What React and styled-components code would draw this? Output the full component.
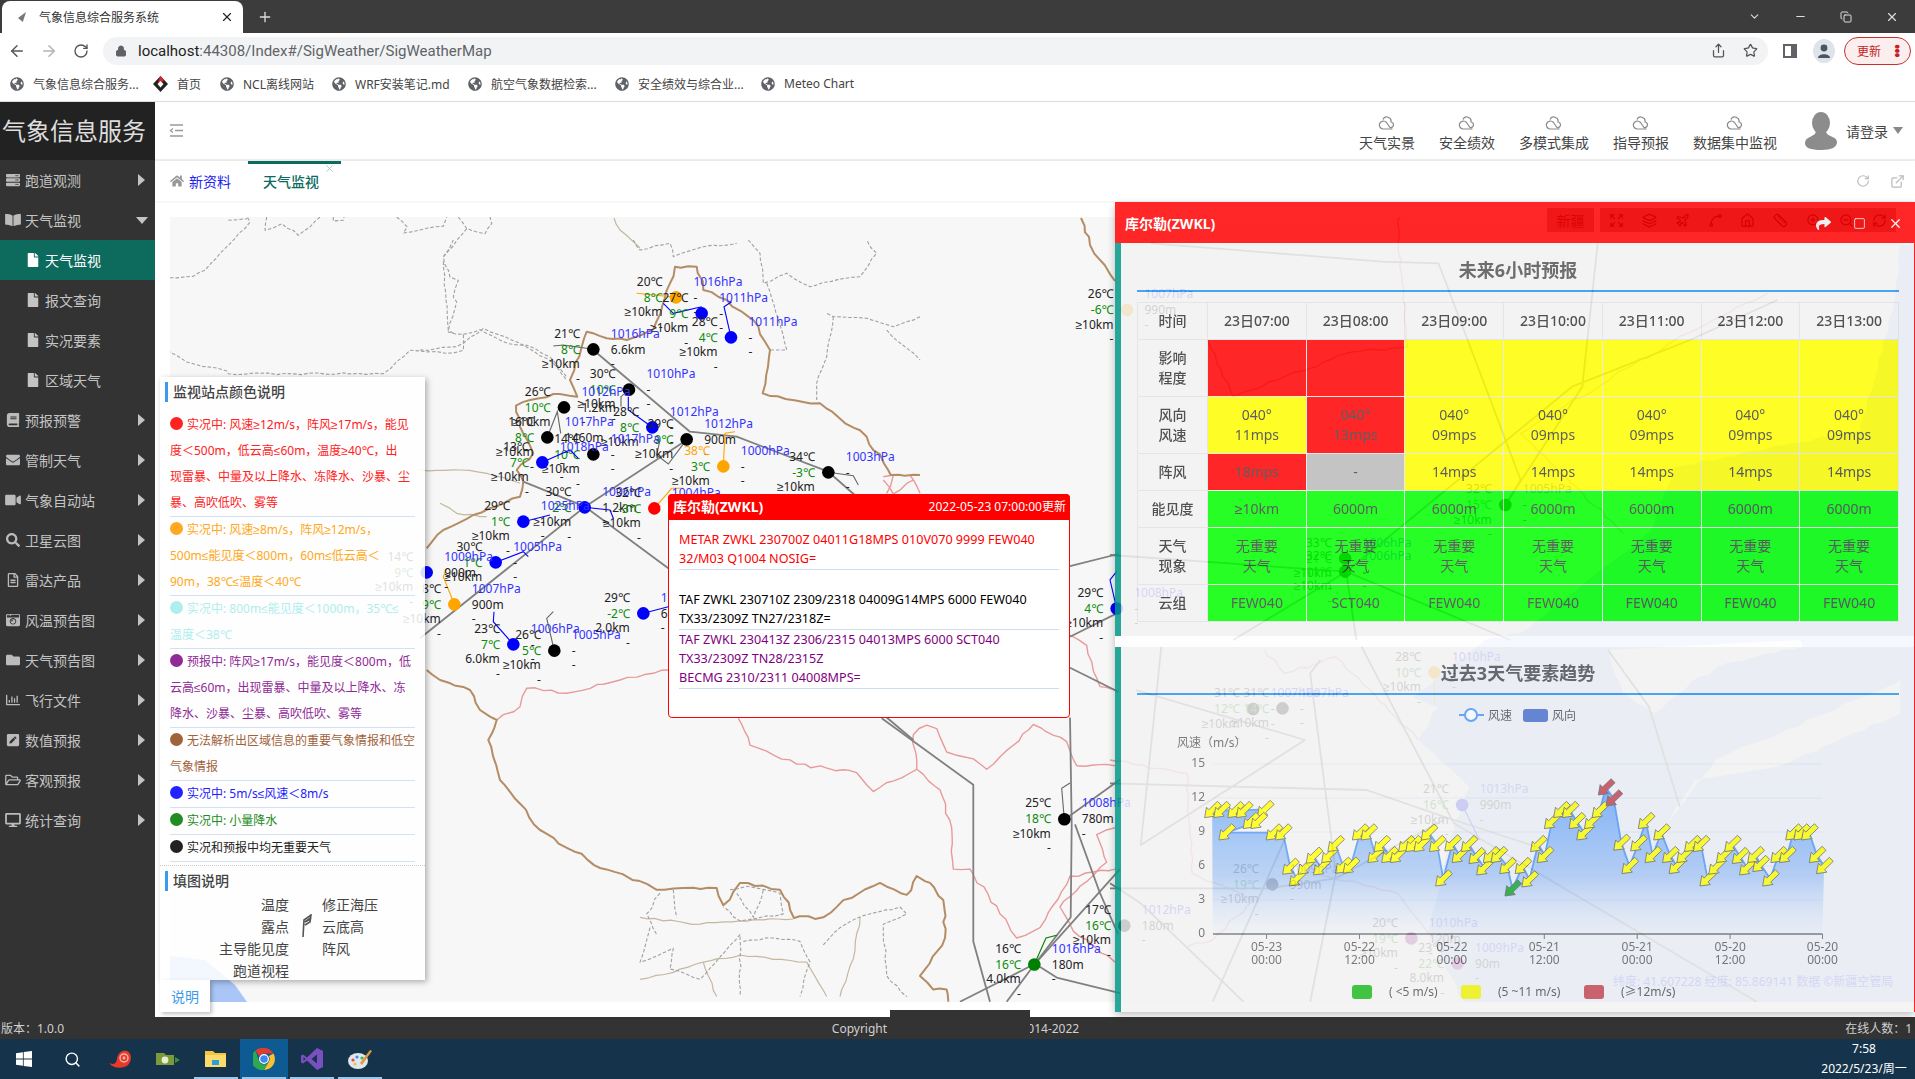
import React from 'react';
import styled, { createGlobalStyle } from 'styled-components';
import {
  ArrowLeft, ArrowRight, RotateCw, Lock, Share, Star, X, Plus, ChevronDown, Minus, Copy, Square, Search,
  Expand, Layers, Plane, Spline, Home, Ruler, ZoomIn, ZoomOut, RefreshCw, RotateCw as Reload, ExternalLink,
} from 'lucide-react';
import {
  FaGlobeAmericas, FaServer, FaBookOpen, FaFile, FaBook, FaEnvelope, FaVideo, FaSearch, FaRegFileAlt, FaCameraRetro,
  FaFolder, FaRegChartBar, FaPenSquare, FaRegFolderOpen, FaDesktop, FaHome, FaShare,
} from 'react-icons/fa';

const FONT = `"Noto Sans", "Liberation Sans", "Noto Sans CJK SC", sans-serif`;

const Global = createGlobalStyle`
  html, body { margin: 0; padding: 0; width: 1915px; height: 1079px; overflow: hidden; background: #fff; }
  * { box-sizing: border-box; }
  body { font-family: ${FONT}; font-size: 14px; }
`;

/* ---------- coordinate helpers: crops of the reference to page pixels ---------- */
const z4 = ([x, y]) => [1110 + x / 1.948, 200 + y / 3];
const z5 = ([x, y]) => [1110 + x / 1.948, 640 + y / 3];
const z6 = ([x, y]) => [420 + x / 3, 240 + y / 3];
const z7 = ([x, y]) => [640 + x / 3, 480 + y / 2.904];
const z8 = ([x, y]) => [170 + x / 3, 217 + y / 3];
const pts = (arr, f = (p) => p) => arr.map((p) => f(p).map((n) => n.toFixed(1)).join(',')).join(' ');

let seed = 7;
const rnd = () => { seed = (seed * 16807) % 2147483647; return seed / 2147483647 - 0.5; };
/* jagged border line through the given points, the way a real boundary wanders */
const rough = (line, amp = 3, step = 9) => {
  const out = [line[0]];
  for (let i = 1; i < line.length; i += 1) {
    const [ax, ay] = line[i - 1];
    const [bx, by] = line[i];
    const n = Math.max(1, Math.round(Math.hypot(bx - ax, by - ay) / step));
    for (let k = 1; k <= n; k += 1) {
      const t = k / n;
      out.push(k === n ? [bx, by] : [ax + (bx - ax) * t + rnd() * amp, ay + (by - ay) * t + rnd() * amp]);
    }
  }
  return out;
};

/* ---------- browser chrome ---------- */
const Page = styled.div`
  width: 1915px; height: 1079px; display: flex; flex-direction: column; overflow: hidden;
`;
const TabStrip = styled.div`
  height: 33px; background: #3c3c3c; display: flex; align-items: flex-end; color: #fff; flex: none;
`;
const BrowserTab = styled.div`
  width: 241px; height: 32px; margin-left: 2px; background: #fff; border-radius: 8px 8px 0 0; color: #333;
  display: flex; align-items: center; font-size: 12px; padding-left: 16px;
`;
const TabFav = styled.span`
  width: 8px; height: 10px; margin-right: 13px; background: #777; clip-path: polygon(100% 0, 60% 100%, 0 60%);
`;
const TabClose = styled.span`
  margin-left: auto; margin-right: 9px; display: flex; color: #222;
`;
const NewTab = styled.span`
  margin-left: 14px; height: 32px; display: flex; align-items: center; color: #ddd;
`;
const WinControls = styled.div`
  margin-left: auto; height: 33px; display: flex; align-items: center; gap: 33px; padding-right: 16px; color: #ddd;
`;
const Toolbar = styled.div`
  height: 35px; background: #fff; display: flex; align-items: center; flex: none; color: #555; padding-left: 1px;
`;
const NavIcon = styled.span`
  width: 32px; display: flex; justify-content: center; color: ${(p) => (p.$dim ? '#b4b4b4' : '#555')};
`;
const AddressBar = styled.div`
  width: 1665px; height: 28px; margin-left: 6px; background: #f1f3f4; border-radius: 14px; display: flex; align-items: center;
  padding-left: 12px; font-size: 15px; font-family: Roboto, sans-serif; color: #5f6368;
`;
const Url = styled.span`
  margin-left: 11px; b { font-weight: 400; color: #222; }
`;
const AddressEnd = styled.div`
  margin-left: auto; display: flex; gap: 17px; padding-right: 10px; color: #555;
`;
const SidePanelIcon = styled.span`
  width: 14px; height: 14px; border: 2px solid #5f6368; border-right-width: 6px; margin-left: 15px;
`;
const ProfileDot = styled.span`
  width: 22px; height: 24px; border-radius: 50%; background: #dfe3ea; margin-left: 16px; display: flex; align-items: center; justify-content: center;
`;
const UpdatePill = styled.div`
  width: 67px; height: 28px; margin-left: 9px; border: 1px solid #c9302c; border-radius: 14px; background: #fbeeee; color: #c5221f;
  display: flex; align-items: center; justify-content: space-between; padding: 0 9px 0 12px; font-size: 12px;
`;
const Dots = styled.span`
  font-size: 14px; line-height: 8px; writing-mode: vertical-rl; letter-spacing: -1px; font-weight: 700;
`;
const BookmarkBar = styled.div`
  height: 34px; border-bottom: 1px solid #dcdcdc; display: flex; align-items: center; padding: 0 0 2px 10px; gap: 15px; font-size: 12px; color: #444; flex: none;
`;
const Bookmark = styled.span`
  display: flex; align-items: center; gap: 9px; width: ${(p) => p.$w}px; white-space: nowrap;
  svg { color: #5f6368; flex: none; }
`;

/* ---------- app shell ---------- */
const Body = styled.div`
  flex: 1; display: flex; min-height: 0;
`;
const Sidebar = styled.aside`
  width: 155px; flex: none; background: #333; display: flex; flex-direction: column;
`;
const Logo = styled.div`
  height: 58px; background: #222; color: #ddd; font-size: 24px; display: flex; align-items: center; padding: 0 0 3px 2px; white-space: nowrap;
`;
const MenuItem = styled.div`
  height: 40px; display: flex; align-items: center; color: #c4c4c4; padding-left: 5px; gap: 4px;
  svg.ic { width: 16px; height: 14px; color: #bbb; flex: none; }
`;
const Caret = styled.span`
  margin-left: auto; margin-right: 10px; width: 0; height: 0; border-style: solid;
  border-width: ${(p) => (p.$open ? '7px 6px 0 6px' : '6px 0 6px 7px')};
  border-color: ${(p) => (p.$open ? '#c4c4c4 transparent transparent transparent' : 'transparent transparent transparent #c4c4c4')};
  ${(p) => (p.$open ? 'margin-right: 7px;' : '')}
`;
const SubItem = styled.div`
  height: 40px; display: flex; align-items: center; padding-left: 27px; gap: 6px;
  background: ${(p) => (p.$active ? '#0d6b5e' : 'transparent')}; color: ${(p) => (p.$active ? '#fff' : '#c4c4c4')};
  svg { width: 12px; height: 14px; }
`;
const Main = styled.main`
  flex: 1; min-width: 0; display: flex; flex-direction: column;
`;
const TopHeader = styled.header`
  height: 59px; flex: none; border-bottom: 2px solid #ececec; display: flex; align-items: center; padding-left: 14px; color: #444;
`;
const HamburgerIcon = styled.span`
  display: flex; color: #999;
`;
const TopNav = styled.nav`
  margin-left: auto; display: flex; gap: 24px; margin-right: 27px; padding-top: 6px;
`;
const NavItem = styled.div`
  display: flex; flex-direction: column; align-items: center; gap: 4px; line-height: 18px; color: #444;
`;
const User = styled.div`
  display: flex; align-items: center; gap: 8px; margin-right: 12px; color: #444;
`;
const UserCaret = styled.span`
  width: 0; height: 0; border-style: solid; border-width: 7px 5px 0 5px; border-color: #888 transparent transparent transparent; margin-left: -3px;
`;
const TabRow = styled.div`
  height: 40px; flex: none; display: flex; align-items: center; padding-left: 15px; color: #888; box-shadow: 0 1px 2px rgba(0, 0, 0, .06); position: relative; z-index: 1;
`;
const HomeTab = styled.div`
  display: flex; align-items: center; gap: 5px; color: #2222ee; width: 78px; svg { color: #999; }
`;
const ActiveTab = styled.div`
  width: 93px; height: 40px; border-top: 3px solid #0d6b5e; color: #0d6b5e; padding: 7px 0 0 15px; position: relative; font-weight: 500;
`;
const TabX = styled.span`
  position: absolute; right: 6px; top: -1px; color: #9fcfc4; display: flex;
`;
const TabTools = styled.div`
  margin-left: auto; display: flex; gap: 20px; padding-right: 10px; color: #bbb;
`;
const Content = styled.div`
  flex: 1; min-height: 0; position: relative; padding: 16px 0 0 15px;
`;
const MapFrame = styled.div`
  position: relative; width: 1745px; height: 785px; background: #f7f7f7;
`;
const MapSvg = styled.svg`
  display: block; width: 1745px; height: 785px; font-family: "Noto Sans", sans-serif; font-size: 12px;
`;
const MapTools = styled.div`
  position: absolute; left: 1392px; top: 7px; display: flex; gap: 6px; height: 24px; z-index: 1;
`;
const RegionBtn = styled.div`
  width: 47px; background: #999; color: #111; font-size: 14px; display: flex; align-items: center; justify-content: center;
`;
const ToolIcons = styled.div`
  width: 296px; background: #999; display: flex; align-items: center; justify-content: space-around; color: #000;
`;
const Censor = styled.div`
  position: absolute; left: 735px; bottom: 0; width: 140px; height: 7px; background: #333;
`;

/* ---------- legend panel ---------- */
const Legend = styled.section`
  position: absolute; left: -10px; top: 160px; width: 265px; height: 603px; background: rgba(255, 255, 255, .86);
  box-shadow: 2px 2px 6px rgba(0, 0, 0, .3); padding-top: 5px;
`;
const LegendTitle = styled.h4`
  margin: 0 0 0 5px; height: 20px; line-height: 20px; border-left: 3px solid #3b9be8; padding-left: 5px; font-size: 14px; font-weight: 500; color: #444;
`;
const LegendList = styled.div`
  margin: 10px 10px 3px;
`;
const LegendRow = styled.div`
  border-bottom: 1px solid #d4e0f5; color: ${(p) => p.$c}; font-size: 12px; line-height: 26px; height: ${(p) => p.$n * 26 + 1}px; white-space: nowrap;
`;
const Bullet = styled.i`
  display: inline-block; width: 13px; height: 13px; border-radius: 50%; background: ${(p) => p.$c}; margin-right: 4px; vertical-align: -1px;
`;
const DottedLine = styled.div`
  border-top: 1px dotted #ccc; margin-bottom: 5px;
`;
const FillGrid = styled.div`
  display: grid; grid-template-columns: 129px 33px 1fr; grid-auto-rows: 22px; align-items: center; margin-top: 2px; color: #444; font-size: 14px;
`;
const FillLeft = styled.span`
  text-align: right; grid-column: 1; white-space: nowrap;
`;
const FillRight = styled.span`
  grid-column: 3; white-space: nowrap;
`;
const FlagWrap = styled.span`
  grid-column: 2; grid-row: 1 / 3; display: flex; justify-content: center; padding-top: 22px; padding-right: 1px; margin-left: 4px;
`;
const LegendTab = styled.div`
  position: absolute; left: -10px; top: 763px; width: 50px; height: 32px; background: #fff; color: #3b9be8; font-size: 14px;
  display: flex; align-items: center; justify-content: center; box-shadow: 2px 2px 4px rgba(0, 0, 0, .25);
`;

/* ---------- popup ---------- */
const Popup = styled.section`
  position: absolute; left: 498px; top: 277px; width: 402px; height: 224px; background: #fff; border: 1px solid #f00; border-radius: 4px;
  color: #000; font-size: 12.6px; line-height: 19.4px; &::before {
    content: ''; position: absolute; left: -9px; top: 7px; border-style: solid; border-width: 6px 8px 6px 0; border-color: transparent #fff transparent transparent;
  }
`;
const PopupHead = styled.header`
  height: 26px; background: #f00; color: #fff; display: flex; align-items: center; justify-content: space-between; padding: 0 4px 0 5px; margin: -1px -1px 0; border-radius: 4px 4px 0 0;
  b { font-size: 14px; } span { font-size: 12px; }
`;
const PopupBody = styled.div`
  padding: 10px 10px 0 10px;
`;
const Report = styled.div`
  color: ${(p) => p.$c}; border-bottom: 1px solid #d0dcf4; margin-bottom: ${(p) => p.$gap || 0}px; white-space: nowrap;
`;

/* ---------- station window ---------- */
const Win = styled.section`
  position: absolute; left: 960px; top: 1px; width: 800px; height: 810px; background: #fff; opacity: .85;
  border-right: 1px solid #f00; border-bottom: 1px solid #f00; box-shadow: 0 3px 8px rgba(0, 0, 0, .3); z-index: 2;
  display: flex; flex-direction: column;
`;
const WinHead = styled.header`
  height: 41px; background: #f00; color: #fff; flex: none; display: flex; align-items: center; padding: 0 11px 0 10px; font-size: 14px; font-weight: 700;
`;
const WinTools = styled.div`
  margin-left: auto; display: flex; align-items: center; gap: 22px; padding-top: 2px;
`;
const Panel = styled.div`
  height: ${(p) => p.$h}px; flex: none; border-left: 6px solid #009688; background: #f3f3f3; margin-top: ${(p) => p.$mt || 0}px; display: flex; flex-direction: column;
`;
const PanelTitle = styled.h3`
  margin: 0 15px 0 16px; height: ${(p) => p.$h}px; padding-top: ${(p) => p.$pt}px; border-bottom: 2px solid #2b97f0; color: #555; font-size: 18px; line-height: 24px; font-weight: 700; text-align: center; flex: none;
`;
const Table = styled.table`
  margin: 10px 0 0 16px; width: 762px; border-collapse: collapse; table-layout: fixed; color: #444; font-size: 14px; line-height: 20px;
`;
const Th = styled.th`
  width: ${(p) => p.$w || 'auto'}; height: ${(p) => (p.$tall ? 57 : 37)}px; border: 1px solid #e2e2e2; font-weight: 500; color: #333; padding: 0; text-align: center;
`;
const COLORS = { R: '#ff0000', Y: '#ffff00', G: '#00ff00', K: '#bbbbbb' };
const Td = styled.td`
  border: 1px solid #e8e8e8; background: ${(p) => COLORS[p.$c]}; padding: 0; text-align: center; color: #444; white-space: nowrap;
`;
const ChartSvg = styled.svg`
  display: block; width: 794px; height: 317px; font-family: "Noto Sans", "Noto Sans CJK SC", sans-serif; font-size: 12px;
`;

/* ---------- footer + taskbar ---------- */
const Footer = styled.footer`
  height: 22px; flex: none; background: #333; color: #d0d0d0; font-size: 12px; display: flex; align-items: center; justify-content: space-between; padding: 0 3px 0 1px; position: relative;
`;
const FootCenter = styled.span`
  position: absolute; left: 0; right: 4px; text-align: center; white-space: nowrap; word-spacing: 2px;
`;
const FootMask = styled.span`
  position: absolute; left: 890px; width: 140px; top: 0; bottom: 0; background: #333;
`;
const Taskbar = styled.div`
  height: 40px; flex: none; background: #15344b; display: flex; align-items: stretch; color: #fff;
`;
const TaskBtn = styled.div`
  width: 48px; display: flex; align-items: center; justify-content: center; position: relative;
  background: ${(p) => (p.$active ? '#0e5a93' : 'transparent')};
  ${(p) => p.$on && `&::after { content: ''; position: absolute; left: 2px; right: 2px; bottom: 0; height: 2px; background: #9cc7e8; }`}
`;
const Clock = styled.div`
  margin-left: auto; width: 102px; text-align: center; font-size: 12px; line-height: 20px; white-space: nowrap;
`;

/* ---------- data ---------- */
const MENUS = [
  [FaServer, '跑道观测'],
  [FaBookOpen, '天气监视', true],
  [FaBook, '预报预警'], [FaEnvelope, '管制天气'], [FaVideo, '气象自动站'], [FaSearch, '卫星云图'], [FaRegFileAlt, '雷达产品'],
  [FaCameraRetro, '风温预告图'], [FaFolder, '天气预告图'], [FaRegChartBar, '飞行文件'], [FaPenSquare, '数值预报'], [FaRegFolderOpen, '客观预报'], [FaDesktop, '统计查询'],
];
const SUBS = ['天气监视', '报文查询', '实况要素', '区域天气'];
const NAVS = ['天气实景', '安全绩效', '多模式集成', '指导预报', '数据集中监视'];
const BOOKS = [
  ['气象信息综合服务...', 128], ['首页', 52, true], ['NCL离线网站', 97], ['WRF安装笔记.md', 121], ['航空气象数据检索...', 132], ['安全绩效与综合业...', 131], ['Meteo Chart', 90],
];

const LEG = [
  ['#ff2222', ['实况中: 风速≥12m/s，阵风≥17m/s，能见', '度＜500m，低云高≤60m，温度≥40℃，出', '现雷暴、中量及以上降水、冻降水、沙暴、尘', '暴、高吹低吹、雾等']],
  ['#ffa820', ['实况中: 风速≥8m/s，阵风≥12m/s，', '500m≤能见度＜800m，60m≤低云高＜', '90m，38℃≤温度＜40℃']],
  ['#aeeeee', ['实况中: 800m≤能见度＜1000m，35℃≤', '温度＜38℃']],
  ['#8f2a96', ['预报中: 阵风≥17m/s，能见度＜800m，低', '云高≤60m，出现雷暴、中量及以上降水、冻', '降水、沙暴、尘暴、高吹低吹、雾等']],
  ['#a0623a', ['无法解析出区域信息的重要气象情报和低空', '气象情报']],
  ['#2222ff', ['实况中: 5m/s≤风速＜8m/s']],
  ['#228b22', ['实况中: 小量降水']],
  ['#222222', ['实况和预报中均无重要天气']],
];

const TIMES = ['23日07:00', '23日08:00', '23日09:00', '23日10:00', '23日11:00', '23日12:00', '23日13:00'];
const ROWS = [
  { h: ['影响', '程度'], tall: true, c: 'RRYYYYY', t: Array(7).fill(['']) },
  { h: ['风向', '风速'], tall: true, c: 'YRYYYYY', t: ['11', '13', '09', '09', '09', '09', '09'].map((v) => ['040°', `${v}mps`]) },
  { h: ['阵风'], c: 'RKYYYYY', t: [['18mps'], ['-'], ['14mps'], ['14mps'], ['14mps'], ['14mps'], ['14mps']] },
  { h: ['能见度'], c: 'GGGGGGG', t: [['≥10km'], ...Array(6).fill(['6000m'])] },
  { h: ['天气', '现象'], tall: true, c: 'GGGGGGG', t: Array(7).fill(['无重要', '天气']) },
  { h: ['云组'], c: 'GGGGGGG', t: [['FEW040'], ['SCT040'], ['FEW040'], ['FEW040'], ['FEW040'], ['FEW040'], ['FEW040']] },
];

/* --- map geometry, page coordinates through the crop helpers --- */
const BROWN = [
  [[20, 925], [70, 870], [160, 825], [250, 790], [300, 770], [310, 725], [290, 690], [340, 640], [300, 560], [288, 497], [330, 480], [400, 462], [472, 470], [450, 420], [485, 320], [500, 275], [560, 295], [620, 300], [700, 268], [750, 130], [765, 80], [830, 80], [850, 150], [920, 180], [1000, 240], [1050, 330], [1028, 460], [1200, 490], [1340, 590], [1412, 705], [1500, 705]].map(z6),
  [[20, 1290], [60, 1320], [150, 1350], [180, 1410], [230, 1440], [205, 1500]].map(z6).concat([[500, 780], [540, 830], [600, 868], [640, 881]]),
  [[0, 1165], [50, 1190], [130, 1185], [230, 1185], [250, 1235], [300, 1170], [420, 1190], [462, 1272], [550, 1270], [610, 1220], [720, 1170], [800, 1205], [830, 1150], [870, 1170], [910, 1220], [915, 1330], [840, 1440], [880, 1480], [920, 1480], [925, 1515]].map(z7),
  [[1081, 218], [1090, 245], [1115, 281]],
].map((l) => rough(l, 3.4, 8));
const PINK = [
  [[230, 1440], [300, 1400], [320, 1345], [440, 1360], [600, 1320], [700, 1300], [745, 1290]].map(z6),
  [[295, 692], [330, 770], [470, 825], [650, 850], [700, 905], [830, 840], [900, 900], [935, 1010], [940, 1130], [990, 1130], [1080, 1260], [1130, 1330], [1200, 1300], [1290, 1150], [1425, 1130]].map(z7),
  [[830, 840], [820, 740], [860, 712], [890, 722], [920, 790], [1000, 810], [1040, 840], [1120, 770], [1180, 710], [1280, 760], [1310, 830], [1425, 830]].map(z7),
  [[1290, 450], [1340, 480], [1380, 600], [1425, 610]].map(z7),
  [[1425, 1010], [1370, 1030], [1400, 1110], [1320, 1180], [1260, 1240], [1300, 1310], [1425, 1400]].map(z7),
  [[730, 0], [760, 40], [820, 0]].map(z7),
  [[1390, 710], [1420, 705], [1400, 760]].map(z6),
  [[1470, 705], [1500, 760]].map(z6),
  [[0, 360], [150, 400], [160, 700], [280, 780], [200, 900], [150, 920]].map(z5),
  [[300, 30], [340, 100], [440, 50], [600, 300]].map(z5),
  [[400, 700], [560, 760], [620, 880]].map(z5),
  [[190, 420], [240, 590], [460, 460], [580, 440], [560, 60], [590, 0]].map(z4),
  [[1000, 1000], [800, 700], [1100, 420], [1280, 280]].map(z4),
].map((l) => rough(l, 3.2, 8));
const GRAYDASH = [
  [[0, 182], [70, 178], [105, 160], [240, 15], [232, 0]].map(z8),
  [[175, 10], [232, 5]].map(z8),
  [[290, 0], [285, 40], [335, 20], [385, 55], [420, 30], [450, 0]].map(z8),
  [[490, 0], [490, 12], [520, 10], [522, 0]].map(z8),
  [[680, 0], [712, 30], [700, 48], [820, 28], [830, 0]].map(z8),
  [[865, 0], [890, 35], [945, 50], [965, 20], [960, 0]].map(z8),
  [[890, 35], [820, 120], [840, 180], [865, 190], [850, 240], [860, 255], [835, 345], [880, 352], [880, 400], [850, 408], [720, 400], [640, 470], [175, 470], [170, 462], [50, 435], [0, 405]].map(z8),
  [[880, 352], [930, 338], [970, 358], [1015, 380], [1070, 385], [1140, 420], [1190, 480]].map(z8),
  [[985, 0], [1020, 40], [1030, 130], [1100, 100], [1170, 140], [1230, 125], [1320, 110], [1370, 40], [1340, 0]].map(z6),
  [[1040, 130], [1100, 330], [1050, 330]].map(z6),
  [[1500, 230], [1420, 260], [1340, 235], [1240, 230], [1220, 220]].map(z6),
  [[1240, 230], [1220, 350], [1190, 430], [1190, 480]].map(z6),
  [[1400, 270], [1500, 360]].map(z6),
  [[640, 0], [660, 30], [750, 10], [760, 50], [850, 20], [950, 10]].map(z6),
  [[70, 50], [100, 0]].map(z6),
  [[100, 280], [85, 270], [70, 60]].map(z6),
  [[0, 330], [110, 320], [190, 265], [300, 310], [400, 370], [440, 420]].map(z6),
  [[30, 1300], [0, 1400], [100, 1360], [90, 1420], [180, 1450], [300, 1320], [300, 1500]].map(z7),
  [[550, 1350], [600, 1300], [670, 1265], [780, 1240], [800, 1260], [730, 1290], [740, 1440], [800, 1500]].map(z7),
  [[310, 1340], [400, 1330], [480, 1340], [510, 1400], [480, 1500]].map(z7),
  [[270, 1190], [320, 1180], [420, 1200], [430, 1260], [300, 1280], [250, 1240]].map(z7),
  [[290, 1200], [340, 1270], [370, 1190]].map(z7),
  [[100, 1190], [110, 1270]].map(z7),
  [[60, 1200], [20, 1260], [50, 1320]].map(z7),
].map((l) => rough(l, 2, 8));
const TAN = [
  [[0, 1270], [180, 1290], [300, 1280], [460, 1275]].map(z7),
  [[0, 1450], [100, 1430], [190, 1400], [300, 1380], [500, 1400]].map(z7),
  [[500, 1400], [560, 1500]].map(z7),
  [[190, 1400], [230, 1500]].map(z7),
  [[0, 690], [120, 690], [200, 700], [300, 730]].map(z6),
  [[60, 790], [110, 820], [200, 830]].map(z6),
  [[660, 1270], [640, 1390], [600, 1500]].map(z7),
  [[614, 218], [620, 230], [640, 248]],
].map((l) => rough(l, 2, 8));
const ROUTES = [
  [[520, 330], [810, 575], [950, 590], [1225, 695], [1310, 770]].map(z6),
  [[0, 1195], [495, 800], [800, 600]].map(z6),
  [[310, 725], [495, 800], [745, 985]].map(z6),
  [[725, 692], [1000, 885], [1000, 1340], [1050, 1515]].map(z7),
  [[1290, 250], [1435, 215]].map(z7),
  [[1290, 455], [1435, 385]].map(z7),
  [[1290, 545], [1435, 615]].map(z7),
  [[1290, 690], [1295, 1000], [1292, 1270], [1185, 1405], [960, 1515]].map(z7),
  [[1305, 1000], [1380, 1200], [1435, 1320]].map(z7),
  [[1185, 1405], [1440, 1130]].map(z7),
  [[1185, 1405], [1250, 1445], [1440, 1490]].map(z7),
  [[1185, 1405], [1100, 1515]].map(z7),
  [[1275, 985], [1440, 870]].map(z7),
  [[1385, 1420], [1480, 1500]].map(z6),
  [[80, 130], [530, 185], [640, 190], [800, 840], [770, 915]].map(z4),
  [[0, 1065], [460, 1115], [900, 560], [1130, 420], [1300, 300]].map(z4),
  [[460, 1115], [480, 1320]].map(z4),
  [[460, 1115], [240, 1320]].map(z4),
  [[460, 1115], [780, 1320]].map(z4),
  [[950, 130], [920, 560], [770, 915]].map(z4),
  [[100, 20], [60, 615], [380, 300]].map(z5),
  [[0, 430], [500, 450], [650, 530], [830, 620]].map(z5),
  [[50, 150], [380, 300]].map(z5),
  [[490, 20], [670, 550], [1260, 1085]].map(z5),
  [[410, 60], [390, 100], [440, 700], [390, 1085]].map(z5),
  [[970, 30], [1050, 200], [1110, 500]].map(z5),
  [[200, 1085], [340, 600]].map(z5),
  [[0, 745], [310, 745], [440, 715], [650, 540]].map(z5),
  [[260, 1085], [60, 790], [0, 730]].map(z5),
];
const SEA = rough([[1900, 245], [1895, 300], [1860, 430], [1675, 467], [1649, 533], [1520, 633], [1485, 640], [1413, 697], [1438, 707], [1418, 740], [1469, 787], [1449, 840], [1438, 893], [1428, 933], [1464, 1002]], 3, 10).concat([[1915, 1002], [1915, 245]]);
const ISLANDS = [
  [[970, 30], [1000, 160], [1060, 220], [1130, 130], [1200, 70], [1350, 20]].map(z5).concat([[1800, 640]]),
  [[1140, 420], [1080, 560], [1180, 360], [1500, 150], [1540, 120], [1540, 220], [1300, 380]].map(z5),
].map((l) => rough(l, 3, 10));

const B = '#0000ff', K = '#000000', O = '#ffa500', R = '#ff0000', V = '#008000';
const ST = [
  [z6([768, 172]), O, '20℃', '8℃', '≥10km', '1016hPa', '-', [[650, 160], [768, 172]].map(z6)],
  [z6([845, 220]), B, '27℃', '9℃', '≥10km', '1011hPa', '-', [[730, 190], [760, 220], [845, 200]].map(z6)],
  [z6([933, 292]), B, '28℃', '4℃', '≥10km', '1011hPa', '-', [[933, 292], [912, 200], [935, 185]].map(z6)],
  [z6([520, 328]), K, '21℃', '8℃', '≥10km', '1016hPa', '6.6km', [[520, 328], [430, 315], [400, 318]].map(z6)],
  [z6([627, 449]), K, '30℃', '10℃', '≥10km', '1010hPa', '-', [[627, 449], [603, 470], [603, 500]].map(z6)],
  [z6([432, 502]), K, '26℃', '10℃', '≥10km', '1012hPa', '1.2km', null],
  [z6([382, 592]), K, '16℃', '8℃', '≥10km', '1017hPa', '1460m', [[382, 592], [412, 515], [422, 580]].map(z6)],
  [z6([697, 562]), B, '28℃', '8℃', '≥10km', '1012hPa', '-', [[697, 562], [625, 510], [625, 470]].map(z6)],
  [z6([800, 598]), K, '29℃', '9℃', '≥10km', '1012hPa', '900m', [[800, 598], [745, 672], [710, 645], [720, 600]].map(z6)],
  [z6([520, 643]), K, '14℃', '10℃', '≥10km', '1017hPa', '-', null],
  [z6([367, 667]), B, '13℃', '7℃', '≥10km', '1018hPa', '-', [[367, 667], [450, 630], [475, 655]].map(z6)],
  [z6([910, 679]), O, '38℃', '3℃', '≥10km', '1000hPa', '-', [[910, 679], [915, 580], [945, 575]].map(z6), O],
  [z6([1225, 697]), K, '34℃', '-3℃', '≥10km', '1003hPa', '-', [[1225, 697], [1300, 707], [1315, 735]].map(z6)],
  [z6([494, 802]), B, '30℃', '2℃', '≥10km', '1006hPa', '1.2km', [[494, 802], [570, 810], [580, 835]].map(z6)],
  [z6([703, 805]), R, '32℃', '-3℃', '≥10km', '1004hPa', '-', [[703, 805], [755, 745], [790, 745]].map(z6)],
  [z6([310, 845]), B, '29℃', '1℃', '≥10km', '1025hPa', '-', [[310, 845], [390, 825]].map(z6)],
  [z6([227, 967]), B, '30℃', '1℃', '≥10km', '1005hPa', '-', [[227, 967], [310, 935], [325, 950]].map(z6)],
  [z6([103, 1093]), O, '8℃', '9℃', '≥10km', '1007hPa', '900m', [[103, 1093], [70, 1010], [80, 985]].map(z6)],
  [z6([20, 997]), B, '14℃', '9℃', '≥10km', '1009hPa', '900m', null],
  [z6([280, 1213]), B, '23℃', '7℃', '6.0km', '1006hPa', '-', [[280, 1213], [220, 1145], [222, 1115]].map(z6)],
  [z6([403, 1232]), K, '26℃', '5℃', '≥10km', '1005hPa', '-', [[403, 1232], [380, 1135], [400, 1115]].map(z6)],
  [z6([670, 1120]), B, '29℃', '-2℃', '2.0km', '1002hPa', '6.0km', [[670, 1120], [745, 1100]].map(z6)],
  [z7([1273, 985]), K, '25℃', '18℃', '≥10km', '1008hPa', '780m', [[1273, 985], [1265, 895], [1290, 880]].map(z7)],
  [z7([1183, 1407]), V, '16℃', '16℃', '4.0km', '1016hPa', '180m', [[1183, 1407], [1218, 1330], [1250, 1322]].map(z7)],
  [z7([1430, 373]), B, '29℃', '4℃', '≥10km', '1008hPa', '-', [[1430, 373], [1410, 290], [1430, 265]].map(z7)],
  [z5([28, 857]), K, '17℃', '16℃', '≥10km', '1012hPa', '180m', null],
  [z4([33, 330]), O, '26℃', '-6℃', '≥10km', '1007hPa', '990m', null],
  [z4([770, 915]), K, '32℃', '15℃', '≥10km', '1005hPa', '-', null],
  [z4([458, 1075]), K, '33℃', '21℃', '≥10km', '1006hPa', '-', null],
  [z4([458, 1115]), K, '32℃', '11℃', '≥10km', '1006hPa', '-', null],
  [z5([632, 97]), O, '28℃', '10℃', '≥10km', '1010hPa', '-', [[632, 97], [632, 190]].map(z5)],
  [z5([279, 207]), K, '31℃', '12℃', '≥10km', '1007hPa', '-', null],
  [z5([336, 205]), K, '31℃', '14℃', '≥10km', '1007hPa', '-', null],
  [z5([316, 733]), K, '26℃', '19℃', '≥10km', '1009hPa', '990m', null],
  [z5([686, 495]), B, '21℃', '16℃', '≥10km', '1013hPa', '990m', [[686, 495], [720, 600]].map(z5)],
  [z5([587, 895]), '#880088', '20℃', '19℃', '≥10km', '1010hPa', '120m', null],
  [z5([677, 970]), '#880088', '23℃', '22℃', '8.0km', '1009hPa', '90m', null],
];

const Line = ({ d, stroke, w, dash }) => (
  <polyline points={pts(d)} fill="none" stroke={stroke} strokeWidth={w} strokeDasharray={dash} strokeLinejoin="round" />
);

const Station = ({ s }) => {
  const [[x, y], color, temp, dew, vis, hpa, cloud, barb, tempColor] = s;
  const lx = x - 13.5;
  const rx = x + 17.5;
  return (
    <g>
      {barb && <polyline points={pts(barb)} fill="none" stroke={color === K ? '#666' : color === R ? O : color} strokeWidth="1.1" />}
      <circle cx={x} cy={y} r="6.3" fill={color} />
      <g textAnchor="end">
        <text x={lx} y={y - 16} dy=".35em" fill={tempColor || '#222'}>{temp}</text>
        <text x={lx} y={y} dy=".35em" fill="#0a8a0a">{dew}</text>
        <text x={lx} y={y + 14.5} dy=".35em" fill="#222">{vis}</text>
        <text x={lx} y={y + 29} dy=".35em" fill="#222">-</text>
      </g>
      <text x={rx} y={y - 16} dy=".35em" fill="#3333ff">{hpa}</text>
      <text x={rx} y={y} dy=".35em" fill="#222">{cloud}</text>
      <text x={rx} y={y + 14.5} dy=".35em" fill="#222">-</text>
    </g>
  );
};

const WeatherMap = () => (
  <MapSvg viewBox="170 217 1745 785">
    <polygon points={pts(SEA)} fill="#bcd2f5" />
    {ISLANDS.map((d, i) => <polygon key={i} points={pts(d)} fill="#f7f7f7" />)}
    <polygon points="170,956 205,960 235,985 247,1002 170,1002" fill="#a9c6f7" />
    {TAN.map((d, i) => <Line key={i} d={d} stroke="#c4b99f" w="1.2" />)}
    {GRAYDASH.map((d, i) => <Line key={i} d={d} stroke="#a0a0a0" w="1.1" dash="3.5 2" />)}
    {PINK.map((d, i) => <Line key={i} d={d} stroke="#e89a9a" w="1.4" />)}
    {BROWN.map((d, i) => <Line key={i} d={d} stroke="#b48c66" w="2" />)}
    {ROUTES.map((d, i) => <Line key={i} d={d} stroke="#808080" w="1.8" />)}
    {ST.map((s, i) => <Station key={i} s={s} />)}
    <text x="1613" y="986" fill="#3333ff" fontFamily={FONT}>纬度: 41.607228 经度: 85.869141 数据 ©新疆空管局</text>
  </MapSvg>
);

/* --- chart --- */
const TIPS = [
  [190, 530], [208, 530], [235, 530], [252, 530], [293, 527], [265, 563], [280, 563], [218, 597], [310, 597], [328, 597], [342, 700], [355, 735], [372, 700], [388, 667], [402, 702], [418, 665], [430, 632], [445, 697], [460, 697], [478, 597], [495, 597], [508, 665], [520, 632], [535, 665], [552, 665], [568, 632], [582, 632], [598, 632], [612, 597], [628, 632], [640, 735], [658, 630], [672, 665], [690, 632], [705, 668], [720, 702], [733, 665], [748, 665], [765, 698], [775, 765], [795, 698], [808, 738], [825, 632], [838, 665], [852, 563], [870, 530], [887, 530], [900, 563], [915, 597], [930, 563], [945, 530], [957, 462], [972, 495], [987, 628], [1003, 698], [1020, 630], [1035, 563], [1048, 665], [1065, 597], [1082, 665], [1095, 698], [1110, 665], [1125, 632], [1142, 632], [1155, 735], [1172, 700], [1187, 665], [1203, 632], [1218, 668], [1232, 702], [1248, 665], [1258, 692], [1277, 735], [1293, 665], [1310, 665], [1322, 597], [1338, 597], [1353, 597], [1368, 665], [1382, 698],
];
const SERIES = TIPS.map(([x, y]) => {
  const [px, py] = z5([x + 9, y - 19]);
  const c = y === 765 ? '#22aa33' : y < 500 ? '#c94f55' : '#ffff10';
  return { x: px, y: py, c };
});
const YT = [15, 12, 9, 6, 3, 0];
const XT = [[305, '05-23'], [486, '05-22'], [666, '05-22'], [846, '05-21'], [1027, '05-21'], [1208, '05-20'], [1388, '05-20']];
const yOf = (v) => 934 - v * (170 / 15);
const xOf = (X) => 1110 + X / 1.948;

const WindChart = () => {
  const first = xOf(200);
  const last = xOf(1388);
  const line = SERIES.map((p) => `${p.x.toFixed(1)},${p.y.toFixed(1)}`).join(' ');
  const area = `${first},934 ${line} ${last},934`;
  return (
    <ChartSvg viewBox="1121 695 794 317">
      <defs>
        <linearGradient id="windFill" gradientUnits="userSpaceOnUse" x1="0" y1="790" x2="0" y2="934">
          <stop offset="0" stopColor="#6faaf7" stopOpacity=".95" />
          <stop offset=".6" stopColor="#9cc0f5" stopOpacity=".75" />
          <stop offset="1" stopColor="#cfe0fa" stopOpacity=".1" />
        </linearGradient>
      </defs>
      <line x1="1459" x2="1484" y1="715" y2="715" stroke="#5b9cf5" strokeWidth="2" />
      <circle cx="1471" cy="715" r="6" fill="#fff" stroke="#5b9cf5" strokeWidth="2" />
      <text x="1488" y="719.5" fill="#555">风速</text>
      <rect x="1523" y="709" width="25" height="13" rx="3" fill="#5577cc" />
      <text x="1552" y="719.5" fill="#555">风向</text>
      <text x="1177" y="746.5" fill="#666">风速（m/s）</text>
      {YT.map((v) => (
        <g key={v}>
          {v > 0 && <line x1="1213" x2="1822.5" y1={yOf(v)} y2={yOf(v)} stroke="#dfe5f0" strokeWidth="1" />}
          <text x="1205" y={yOf(v) + 2.5} textAnchor="end" fill="#666">{v}</text>
        </g>
      ))}
      <polygon points={area} fill="url(#windFill)" />
      <polyline points={line} fill="none" stroke="#5b9cf5" strokeWidth="1.8" />
      <line x1="1213" x2="1822.5" y1="934" y2="934" stroke="#6e7079" strokeWidth="1.4" />
      {XT.map(([X, d], i) => (
        <g key={i} textAnchor="middle" fill="#666">
          <line x1={xOf(X)} x2={xOf(X)} y1="934" y2="939" stroke="#6e7079" />
          <text x={xOf(X)} y="951">{d}</text>
          <text x={xOf(X)} y="963.5">{i % 2 ? '12:00' : '00:00'}</text>
        </g>
      ))}
      {SERIES.map((p, i) => (
        <path key={i} transform={`translate(${p.x.toFixed(1)} ${p.y.toFixed(1)}) rotate(-44)`} d="M-10.5 0 L-2 -6.2 L-2 -2.8 L10 -2.8 L10 2.8 L-2 2.8 L-2 6.2 Z" fill={p.c} stroke="#666" strokeWidth=".8" />
      ))}
      <rect x="1352" y="985" width="20" height="14" rx="3" fill="#22bb22" />
      <text x="1389" y="996" fill="#555">( &lt;5 m/s)</text>
      <rect x="1461" y="985" width="20" height="14" rx="3" fill="#f7f710" />
      <text x="1498" y="996" fill="#555">(5 ~11 m/s)</text>
      <rect x="1584" y="985" width="20" height="14" rx="3" fill="#c94f55" />
      <text x="1621" y="996" fill="#555">(≥12m/s)</text>
    </ChartSvg>
  );
};

const Flag = () => (
  <svg width="10" height="24" viewBox="0 0 10 24">
    <path d="M1 23 L2 6 L9 1 L8.5 4 L3 8 L8.5 5 L8 8 L3 11" fill="none" stroke="#555" strokeWidth="1.6" />
  </svg>
);
const CloudIcon = () => (
  <svg width="19" height="14" viewBox="0 0 19 14" fill="none" stroke="#8a8a8a" strokeWidth="1.2">
    <path d="M14.5 13 H5 A4 4 0 1 1 8.5 6.5 L12 11.5 A2.8 2.8 0 1 0 13 6 A4.2 4.2 0 0 0 5 3.6" />
  </svg>
);
const Avatar = () => (
  <svg width="34" height="38" viewBox="0 0 34 38" fill="#8c8c8c">
    <ellipse cx="17" cy="11" rx="9" ry="11" />
    <path d="M12 19 C12 25 1 24 1 31 C1 36 7 38 17 38 C28 38 33 35 33 30 C33 24 22 25 22 19 Z" />
  </svg>
);
const Collapse = () => (
  <svg width="15" height="13" viewBox="0 0 15 13" fill="none" stroke="#999" strokeWidth="1.3">
    <path d="M1 1 H14 M6 6.5 H14 M1 12 H14 M4 4.5 L1.5 6.5 L4 8.5" />
  </svg>
);
const CodeMark = () => (
  <svg width="15" height="16" viewBox="0 0 15 16">
    <path d="M7.5 0 L15 8 L7.5 16 L0 8 Z" fill="#222" />
    <path d="M7.5 0 L11 4 L7.5 8 L5 5.5 Z" fill="#d8262c" />
    <path d="M7.5 5 L10.5 8 L7.5 11.5 L4.5 8 Z" fill="#fff" />
  </svg>
);
const WinLogo = () => (
  <svg width="16" height="16" viewBox="0 0 16 16" fill="#fff">
    <path d="M0 2.2 L6.9 1.2 V7.6 H0 Z M7.7 1.1 L16 0 V7.6 H7.7 Z M0 8.4 H6.9 V14.8 L0 13.8 Z M7.7 8.4 H16 V16 L7.7 14.9 Z" />
  </svg>
);
const Snail = () => (
  <svg width="24" height="20" viewBox="0 0 24 20">
    <path d="M1 14 C6 16 8 15 9 10 C10 3 15 1 19 2 C24 4 24 12 20 16 C15 20 6 20 1 14 Z" fill="#e8392c" />
    <circle cx="16" cy="9" r="4" fill="none" stroke="#f6b8a8" strokeWidth="1.4" />
    <circle cx="16" cy="9" r="1.4" fill="#f6b8a8" />
  </svg>
);
const GreenApp = () => (
  <svg width="24" height="16" viewBox="0 0 24 16">
    <path d="M0 2 H8 L10 4 H18 V14 H0 Z" fill="#7c9a3a" />
    <circle cx="9" cy="9" r="3.4" fill="#e8efd0" />
    <path d="M19 6 L24 9 L19 12 Z" fill="#3a8f3a" />
  </svg>
);
const Explorer = () => (
  <svg width="22" height="18" viewBox="0 0 22 18">
    <path d="M0 1 H8 L10 3 H21 V17 H0 Z" fill="#f5c542" />
    <rect x="0" y="5" width="21" height="12" fill="#fbdc6a" />
    <rect x="7" y="10" width="7" height="5" fill="#2c9be0" />
  </svg>
);
const ChromeLogo = () => (
  <svg width="22" height="22" viewBox="0 0 22 22">
    <path d="M11 0 A11 11 0 0 1 20.5 5.5 H11 A5.5 5.5 0 0 0 6.2 8.2 L2.5 2.5 A11 11 0 0 1 11 0 Z" fill="#e33b2e" />
    <path d="M20.5 5.5 A11 11 0 0 1 11 22 L15.8 13.8 A5.5 5.5 0 0 0 15.8 8 Z" fill="#f8c12e" />
    <path d="M2.5 2.5 A11 11 0 0 0 11 22 L15.8 13.8 A5.5 5.5 0 0 1 6.2 13.8 Z" fill="#2da94f" />
    <circle cx="11" cy="11" r="4.4" fill="#4285f4" stroke="#fff" strokeWidth="1.2" />
  </svg>
);
const VsLogo = () => (
  <svg width="24" height="24" viewBox="0 0 24 24">
    <path d="M17 1 L23 4 V20 L17 23 L7 13.5 L3 16.5 L1 15.5 V8.5 L3 7.5 L7 10.5 Z M17 7.5 L11.5 12 L17 16.5 Z M3.5 10 V14 L5.5 12 Z" fill="#7a4fc0" />
  </svg>
);
const Palette = () => (
  <svg width="24" height="22" viewBox="0 0 24 22">
    <ellipse cx="10" cy="13" rx="10" ry="8" fill="#dfe6ee" />
    <circle cx="5" cy="12" r="1.6" fill="#e6483c" />
    <circle cx="9" cy="9" r="1.6" fill="#3c8ee6" />
    <circle cx="14" cy="10" r="1.6" fill="#3fb55a" />
    <circle cx="7" cy="16" r="1.6" fill="#e6c53c" />
    <path d="M12 15 L22 2 L24 3 L14 17 Z" fill="#e09a3c" />
  </svg>
);

export default function App() {
  return (
    <>
      <Global />
      <Page>
        <TabStrip>
          <BrowserTab>
            <TabFav />
            气象信息综合服务系统
            <TabClose><X size={14} /></TabClose>
          </BrowserTab>
          <NewTab><Plus size={16} /></NewTab>
          <WinControls>
            <ChevronDown size={13} />
            <Minus size={13} />
            <Copy size={12} />
            <X size={14} />
          </WinControls>
        </TabStrip>
        <Toolbar>
          <NavIcon><ArrowLeft size={18} /></NavIcon>
          <NavIcon $dim><ArrowRight size={18} /></NavIcon>
          <NavIcon><RotateCw size={16} /></NavIcon>
          <AddressBar>
            <Lock size={12} fill="#5f6368" />
            <Url><b>localhost</b>:44308/Index#/SigWeather/SigWeatherMap</Url>
            <AddressEnd>
              <Share size={15} />
              <Star size={15} />
            </AddressEnd>
          </AddressBar>
          <SidePanelIcon />
          <ProfileDot>
            <svg width="12" height="14" viewBox="0 0 12 14" fill="#4a5568"><circle cx="6" cy="4" r="3.4" /><path d="M0 14 C0 9 12 9 12 14 Z" /></svg>
          </ProfileDot>
          <UpdatePill>更新<Dots>•••</Dots></UpdatePill>
        </Toolbar>
        <BookmarkBar>
          {BOOKS.map(([t, w, code]) => (
            <Bookmark key={t} $w={w}>
              {code ? <CodeMark /> : <FaGlobeAmericas size={14} />}
              {t}
            </Bookmark>
          ))}
        </BookmarkBar>
        <Body>
          <Sidebar>
            <Logo>气象信息服务</Logo>
            {MENUS.map(([Icon, label, open]) => (
              <React.Fragment key={label}>
                <MenuItem>
                  <Icon className="ic" />
                  {label}
                  <Caret $open={open} />
                </MenuItem>
                {open && SUBS.map((s, i) => (
                  <SubItem key={s} $active={i === 0}><FaFile />{s}</SubItem>
                ))}
              </React.Fragment>
            ))}
          </Sidebar>
          <Main>
            <TopHeader>
              <HamburgerIcon><Collapse /></HamburgerIcon>
              <TopNav>
                {NAVS.map((n) => (
                  <NavItem key={n}><CloudIcon />{n}</NavItem>
                ))}
              </TopNav>
              <User><Avatar />请登录<UserCaret /></User>
            </TopHeader>
            <TabRow>
              <HomeTab><FaHome size={14} />新资料</HomeTab>
              <ActiveTab>天气监视<TabX><X size={11} /></TabX></ActiveTab>
              <TabTools>
                <Reload size={14} />
                <ExternalLink size={15} />
              </TabTools>
            </TabRow>
            <Content>
              <MapTools>
                <RegionBtn>新疆</RegionBtn>
                <ToolIcons>
                  <Expand size={15} /><Layers size={15} /><Plane size={15} /><Spline size={15} /><Home size={15} /><Ruler size={15} /><ZoomIn size={15} /><ZoomOut size={15} /><RefreshCw size={15} />
                </ToolIcons>
              </MapTools>
              <MapFrame>
                <WeatherMap />
                <Legend>
                  <LegendTitle>监视站点颜色说明</LegendTitle>
                  <LegendList>
                    {LEG.map(([c, lines], i) => (
                      <LegendRow key={i} $c={c} $n={lines.length}>
                        <Bullet $c={c} />
                        {lines[0]}
                        {lines.slice(1).map((l) => <div key={l}>{l}</div>)}
                      </LegendRow>
                    ))}
                  </LegendList>
                  <DottedLine />
                  <LegendTitle>填图说明</LegendTitle>
                  <FillGrid>
                    <FillLeft>温度</FillLeft><FlagWrap><Flag /></FlagWrap><FillRight>修正海压</FillRight>
                    <FillLeft>露点</FillLeft><FillRight>云底高</FillRight>
                    <FillLeft>主导能见度</FillLeft><FillRight>阵风</FillRight>
                    <FillLeft>跑道视程</FillLeft>
                  </FillGrid>
                </Legend>
                <LegendTab>说明</LegendTab>
                <Popup>
                  <PopupHead><b>库尔勒(ZWKL)</b><span>2022-05-23 07:00:00更新</span></PopupHead>
                  <PopupBody>
                    <Report $c="#ff0000" $gap={20}>METAR ZWKL 230700Z 04011G18MPS 010V070 9999 FEW040<br />32/M03 Q1004 NOSIG=</Report>
                    <Report $c="#000000">TAF ZWKL 230710Z 2309/2318 04009G14MPS 6000 FEW040<br />TX33/2309Z TN27/2318Z=</Report>
                    <Report $c="#800080">TAF ZWKL 230413Z 2306/2315 04013MPS 6000 SCT040<br />TX33/2309Z TN28/2315Z<br />BECMG 2310/2311 04008MPS=</Report>
                  </PopupBody>
                </Popup>
              </MapFrame>
              <Win>
                <WinHead>
                  库尔勒(ZWKL)
                  <WinTools>
                    <FaShare size={15} />
                    <Square size={13} strokeWidth={1.5} />
                    <X size={15} />
                  </WinTools>
                </WinHead>
                <Panel $h={393}>
                  <PanelTitle $h={49} $pt={15}>未来6小时预报</PanelTitle>
                  <Table>
                    <thead>
                      <tr>
                        <Th $w="70px">时间</Th>
                        {TIMES.map((t) => <Th key={t}>{t}</Th>)}
                      </tr>
                    </thead>
                    <tbody>
                      {ROWS.map((r, i) => (
                        <tr key={i}>
                          <Th $tall={r.tall}>{r.h.map((l) => <div key={l}>{l}</div>)}</Th>
                          {r.t.map((lines, j) => (
                            <Td key={j} $c={r.c[j]}>{lines.map((l, k) => <div key={k}>{l}</div>)}</Td>
                          ))}
                        </tr>
                      ))}
                    </tbody>
                  </Table>
                </Panel>
                <Panel $h={365} $mt={11}>
                  <PanelTitle $h={48} $pt={14}>过去3天气要素趋势</PanelTitle>
                  <WindChart />
                </Panel>
              </Win>
              <Censor />
            </Content>
          </Main>
        </Body>
        <Footer>
          <span>版本：1.0.0</span>
          <FootCenter>Copyright © 新疆空管局气象中心 2014-2022</FootCenter>
          <FootMask />
          <span>在线人数：1</span>
        </Footer>
        <Taskbar>
          <TaskBtn><WinLogo /></TaskBtn>
          <TaskBtn><Search size={17} /></TaskBtn>
          <TaskBtn><Snail /></TaskBtn>
          <TaskBtn><GreenApp /></TaskBtn>
          <TaskBtn $on><Explorer /></TaskBtn>
          <TaskBtn $active $on><ChromeLogo /></TaskBtn>
          <TaskBtn $on><VsLogo /></TaskBtn>
          <TaskBtn $on><Palette /></TaskBtn>
          <Clock>7:58<br />2022/5/23/周一</Clock>
        </Taskbar>
      </Page>
    </>
  );
}
